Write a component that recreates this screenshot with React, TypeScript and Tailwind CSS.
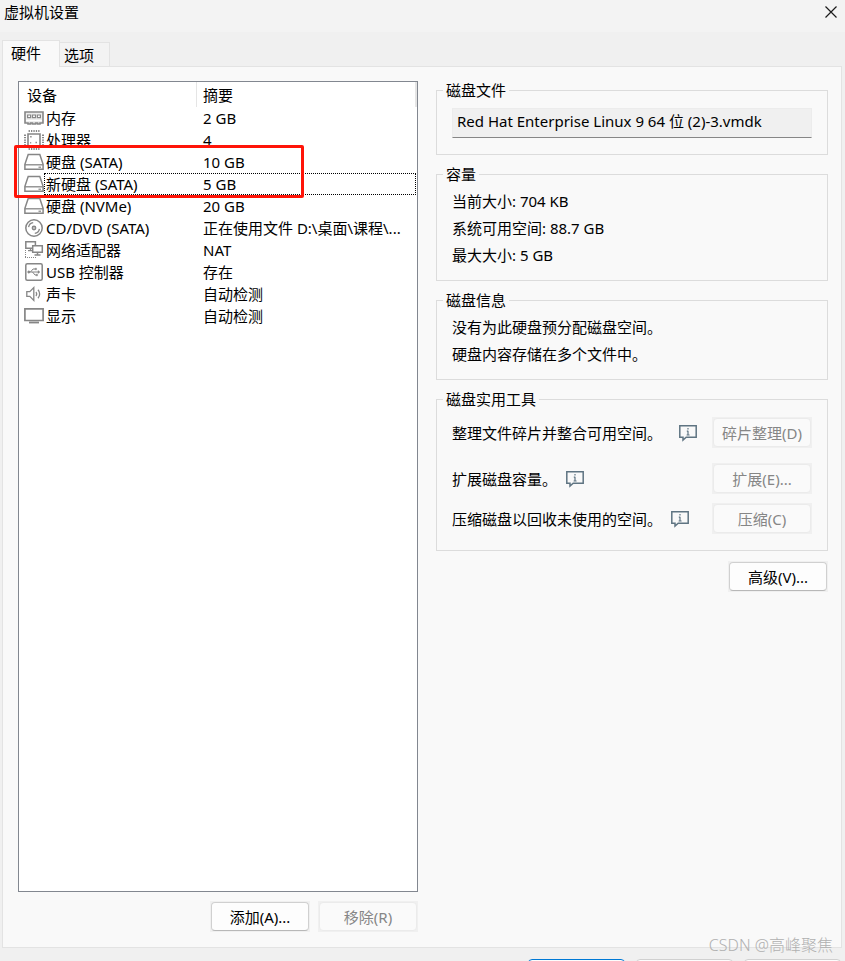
import type { ReactNode } from 'react';
import clsx from 'clsx';

interface Device {
  name: string;
  summary: string;
  icon: ReactNode;
  focused?: boolean;
}

function DeviceIcon({ children }: { children: ReactNode }) {
  return (
    <svg width="20" height="20" viewBox="0 0 20 20" fill="none" stroke="#868686" className="shrink-0" aria-hidden="true">
      {children}
    </svg>
  );
}

const memoryIcon = (
  <DeviceIcon>
    <path d="M1 4h18v11h-3v1h-2.5v-1h-2v1h-3v-1h-2v1H4v-1H1z" strokeWidth="1.6" fill="#ececec" />
    <path d="M3.6 7h3v2.6h-3zM8.5 7h3v2.6h-3zM13.4 7h3v2.6h-3z" strokeWidth="1.2" fill="#fff" />
    <path d="M2 12.5h16" stroke="#fff" strokeWidth="1.2" />
  </DeviceIcon>
);

const cpuIcon = (
  <DeviceIcon>
    <path d="M4 4h12v12H4z" strokeWidth="1.6" />
    <path d="M4.6 1h10.9M4.6 19h10.9M1 4.6v10.9M19 4.6v10.9" strokeWidth="2" strokeDasharray="1.3 1.1" />
    <path d="M6.2 6.8h1.4M11.5 12.5h1.4M6.2 12.8h1" strokeWidth="1.4" />
  </DeviceIcon>
);

const diskIcon = (
  <DeviceIcon>
    <path d="M4.2 2.5h11.6l3.3 9.8v5H.9v-5z" strokeWidth="1.5" />
    <path d="M.9 12.8h18.2" strokeWidth="1.3" />
    <path d="M14.5 15.2h2.5" strokeWidth="1.2" />
  </DeviceIcon>
);

const discIcon = (
  <DeviceIcon>
    <circle cx="10" cy="10" r="8.2" strokeWidth="1.5" />
    <circle cx="10" cy="10" r="1.6" strokeWidth="1.6" />
    <path d="M4.6 9.2a5.4 5.4 0 0 1 4.6-4.6M15.4 10.8a5.4 5.4 0 0 1-4.6 4.6" strokeWidth="1.3" />
  </DeviceIcon>
);

const networkIcon = (
  <DeviceIcon>
    <path d="M1.8 1.8h9.6v6.4H1.8z" strokeWidth="1.5" />
    <path d="M6.5 8.5v2M4 10.6h4" strokeWidth="1.3" />
    <path d="M8.7 5.8h9.6v6.4H8.7z" strokeWidth="1.5" fill="#fff" />
    <path d="M13.5 12.5v2M10.5 15h6" strokeWidth="1.5" />
    <path d="M1.5 10v8M1 17.5h12" strokeDasharray="1 1" />
  </DeviceIcon>
);

const usbIcon = (
  <DeviceIcon>
    <rect x="1.8" y="1.8" width="16.4" height="16.4" rx="1.5" strokeWidth="1.5" />
    <path d="M4 10h11M6.5 10l2.5-3h2M8.5 10l2.5 3h1" />
    <circle cx="4.8" cy="10" r="1" fill="#868686" />
    <path d="M14 8.5v3l2-1.5zM11 6.2h1.6v1.6H11zM12 12.2h1.6v1.6H12z" fill="#868686" strokeWidth=".4" />
  </DeviceIcon>
);

const soundIcon = (
  <DeviceIcon>
    <path d="M2.8 7.6h3l4-4v12.8l-4-4h-3z" strokeWidth="1.3" />
    <path d="M12 8a3.4 3.4 0 0 1 0 4M14 5.8a6.2 6.2 0 0 1 0 8.4" strokeWidth="1.3" />
  </DeviceIcon>
);

const displayIcon = (
  <DeviceIcon>
    <path d="M.9 2.9h18.2v11.6H.9z" strokeWidth="1.7" />
    <path d="M5 16.5h10" strokeWidth="1.8" />
  </DeviceIcon>
);

const devices: Device[] = [
  { name: '内存', summary: '2 GB', icon: memoryIcon },
  { name: '处理器', summary: '4', icon: cpuIcon },
  { name: '硬盘 (SATA)', summary: '10 GB', icon: diskIcon },
  { name: '新硬盘 (SATA)', summary: '5 GB', icon: diskIcon, focused: true },
  { name: '硬盘 (NVMe)', summary: '20 GB', icon: diskIcon },
  { name: 'CD/DVD (SATA)', summary: '正在使用文件 D:\\桌面\\课程\\...', icon: discIcon },
  { name: '网络适配器', summary: 'NAT', icon: networkIcon },
  { name: 'USB 控制器', summary: '存在', icon: usbIcon },
  { name: '声卡', summary: '自动检测', icon: soundIcon },
  { name: '显示', summary: '自动检测', icon: displayIcon },
];

function PushButton({ children, disabled }: { children: ReactNode; disabled?: boolean }) {
  return (
    <span className="flex shrink-0 bg-[#f0f0f0] p-px">
      <button
        type="button"
        disabled={disabled}
        className={clsx(
          'h-[29px] w-[98px] rounded border',
          disabled
            ? 'border-[#ebebeb] bg-[#fafafa] text-[#868686]'
            : 'border-[#d0d0d0] border-b-[#b8b8b8] bg-[#fdfdfd] text-black',
        )}
      >
        {children}
      </button>
    </span>
  );
}

function Group({ title, className, children }: { title: string; className: string; children: ReactNode }) {
  return (
    <fieldset className={clsx('min-w-0 border border-[#dcdcdc] px-[15px]', className)}>
      <legend className="-ml-[9px] px-[3px] leading-5">{title}</legend>
      {children}
    </fieldset>
  );
}

function InfoButton() {
  return (
    <button type="button" aria-label="详细信息" className="shrink-0">
      <svg width="18" height="18" viewBox="0 0 18 18" fill="none" stroke="#5f7482" aria-hidden="true">
        <path d="M.8 1.8h16.4v11.4H7.2L4 16v-2.8H.8z" strokeWidth="1.5" />
        <path d="M9 4v1.6M9 6.8V11M7.8 7.2H9M7.6 11h3" strokeWidth="1.2" />
      </svg>
    </button>
  );
}

// 设备列表
function DeviceList() {
  return (
    <div className="relative flex-1 border border-[#828790] bg-white">
      <table className="w-full table-fixed border-separate border-spacing-0 text-left">
        <thead>
          <tr className="h-[25px]">
            <th className="w-[178px] border-r border-[#e5e5e5] p-0 pl-2 font-normal">设备</th>
            <th className="border-r-2 border-[#e5e5e5] p-0 pl-[6px] font-normal">摘要</th>
          </tr>
        </thead>
        <tbody>
          {devices.map((device) => (
            <tr key={device.name} className="relative h-[22px]">
              <td className="p-0">
                <div className="flex h-[22px] items-center gap-[2px] pl-[5px] whitespace-nowrap">
                  {device.icon}
                  {device.name}
                </div>
                {device.focused && (
                  <div className="absolute inset-y-0 right-px left-[25px] border border-dotted border-black" />
                )}
              </td>
              <td className="truncate p-0 pl-[6px] leading-[22px]">{device.summary}</td>
            </tr>
          ))}
        </tbody>
      </table>
      {/* 红色标注框 */}
      <div className="pointer-events-none absolute top-[63px] -left-[5px] h-[53px] w-[290px] rounded-xs border-3 border-[#ff1408]" />
    </div>
  );
}

export default function App() {
  return (
    <div className="relative flex h-screen flex-col overflow-hidden bg-[#f0f0f0] font-['Noto_Sans','Noto_Sans_CJK_SC',sans-serif] text-[15px] leading-5 text-black">
      <header className="flex h-8 shrink-0 items-start justify-between bg-[#f3f3f3] pt-[2px] pr-1 pl-1">
        <h1>虚拟机设置</h1>
        <button type="button" aria-label="关闭" className="p-1">
          <svg width="12" height="12" viewBox="0 0 12 12" stroke="#1a1a1a" strokeWidth="1.2" aria-hidden="true">
            <path d="M.5.5l11 11M11.5.5l-11 11" />
          </svg>
        </button>
      </header>

      {/* 选项卡 */}
      <div role="tablist" className="z-10 -mb-px ml-[2px] flex h-[35px] shrink-0 items-end">
        <button
          type="button"
          role="tab"
          aria-selected="true"
          className="h-[27px] w-[58px] border border-b-0 border-[#e3e3e3] bg-[#f9f9f9] pb-[3px] pl-2 text-left"
        >
          硬件
        </button>
        <button
          type="button"
          role="tab"
          aria-selected="false"
          className="h-[25px] w-[50px] border border-l-0 border-[#e3e3e3] bg-[#f3f3f3] pl-1 text-left"
        >
          选项
        </button>
      </div>

      <main className="mr-[3px] ml-[2px] grid min-h-0 flex-1 grid-cols-[50fr_49fr] gap-[18px] border border-[#e3e3e3] bg-[#f9f9f9] pr-[13px] pb-[15px] pl-[15px]">
        <section className="flex min-w-0 flex-col gap-[9px] pt-[14px]">
          <DeviceList />
          <div className="flex justify-end gap-2">
            <PushButton>添加(A)...</PushButton>
            <PushButton disabled>移除(R)</PushButton>
          </div>
        </section>

        <section className="flex min-w-0 flex-col gap-[9px] pt-[13px]">
          <Group title="磁盘文件" className="pt-2 pb-4">
            <input
              type="text"
              readOnly
              aria-label="磁盘文件"
              value="Red Hat Enterprise Linux 9 64 位 (2)-3.vmdk"
              className="block h-[30px] w-full border border-[#ececec] border-b-[#868686] bg-[#f0f0f0] px-1 pb-[6px]"
            />
          </Group>

          <Group title="容量" className="pt-1 pb-[11px] leading-[27px]">
            <p>当前大小: 704 KB</p>
            <p>系统可用空间: 88.7 GB</p>
            <p>最大大小: 5 GB</p>
          </Group>

          <Group title="磁盘信息" className="pt-1 pb-[11px] leading-[27px]">
            <p>没有为此硬盘预分配磁盘空间。</p>
            <p>硬盘内容存储在多个文件中。</p>
          </Group>

          <Group title="磁盘实用工具" className="pt-2 pb-4">
            <div className="mb-[15px] flex items-center">
              <span className="mr-[17px]">整理文件碎片并整合可用空间。</span>
              <InfoButton />
              <span className="flex-1" />
              <PushButton disabled>碎片整理(D)</PushButton>
            </div>
            <div className="mb-[9px] flex items-center">
              <span className="mr-[9px]">扩展磁盘容量。</span>
              <InfoButton />
              <span className="flex-1" />
              <PushButton disabled>扩展(E)...</PushButton>
            </div>
            <div className="flex items-center">
              <span className="mr-[9px]">压缩磁盘以回收未使用的空间。</span>
              <InfoButton />
              <span className="flex-1" />
              <PushButton disabled>压缩(C)</PushButton>
            </div>
          </Group>

          <div className="flex justify-end pt-px">
            <PushButton>高级(V)...</PushButton>
          </div>
        </section>
      </main>

      <footer className="flex h-[13px] shrink-0 items-start justify-end gap-[11px] overflow-hidden pt-[11px] pr-1">
        <button type="button" aria-label="确定" className="h-[29px] w-[97px] shrink-0 rounded border border-[#0078d4] bg-[#fdfdfd]" />
        <button type="button" aria-label="取消" className="h-[29px] w-[97px] shrink-0 rounded border border-[#d0d0d0] bg-[#fdfdfd]" />
        <button type="button" aria-label="帮助" className="h-[29px] w-[97px] shrink-0 rounded border border-[#d0d0d0] bg-[#fdfdfd]" />
      </footer>

      <div className="pointer-events-none absolute right-3 bottom-[6px] text-base leading-5 font-light text-[#b0b0b0]">
        CSDN @高峰聚焦
      </div>
    </div>
  );
}
